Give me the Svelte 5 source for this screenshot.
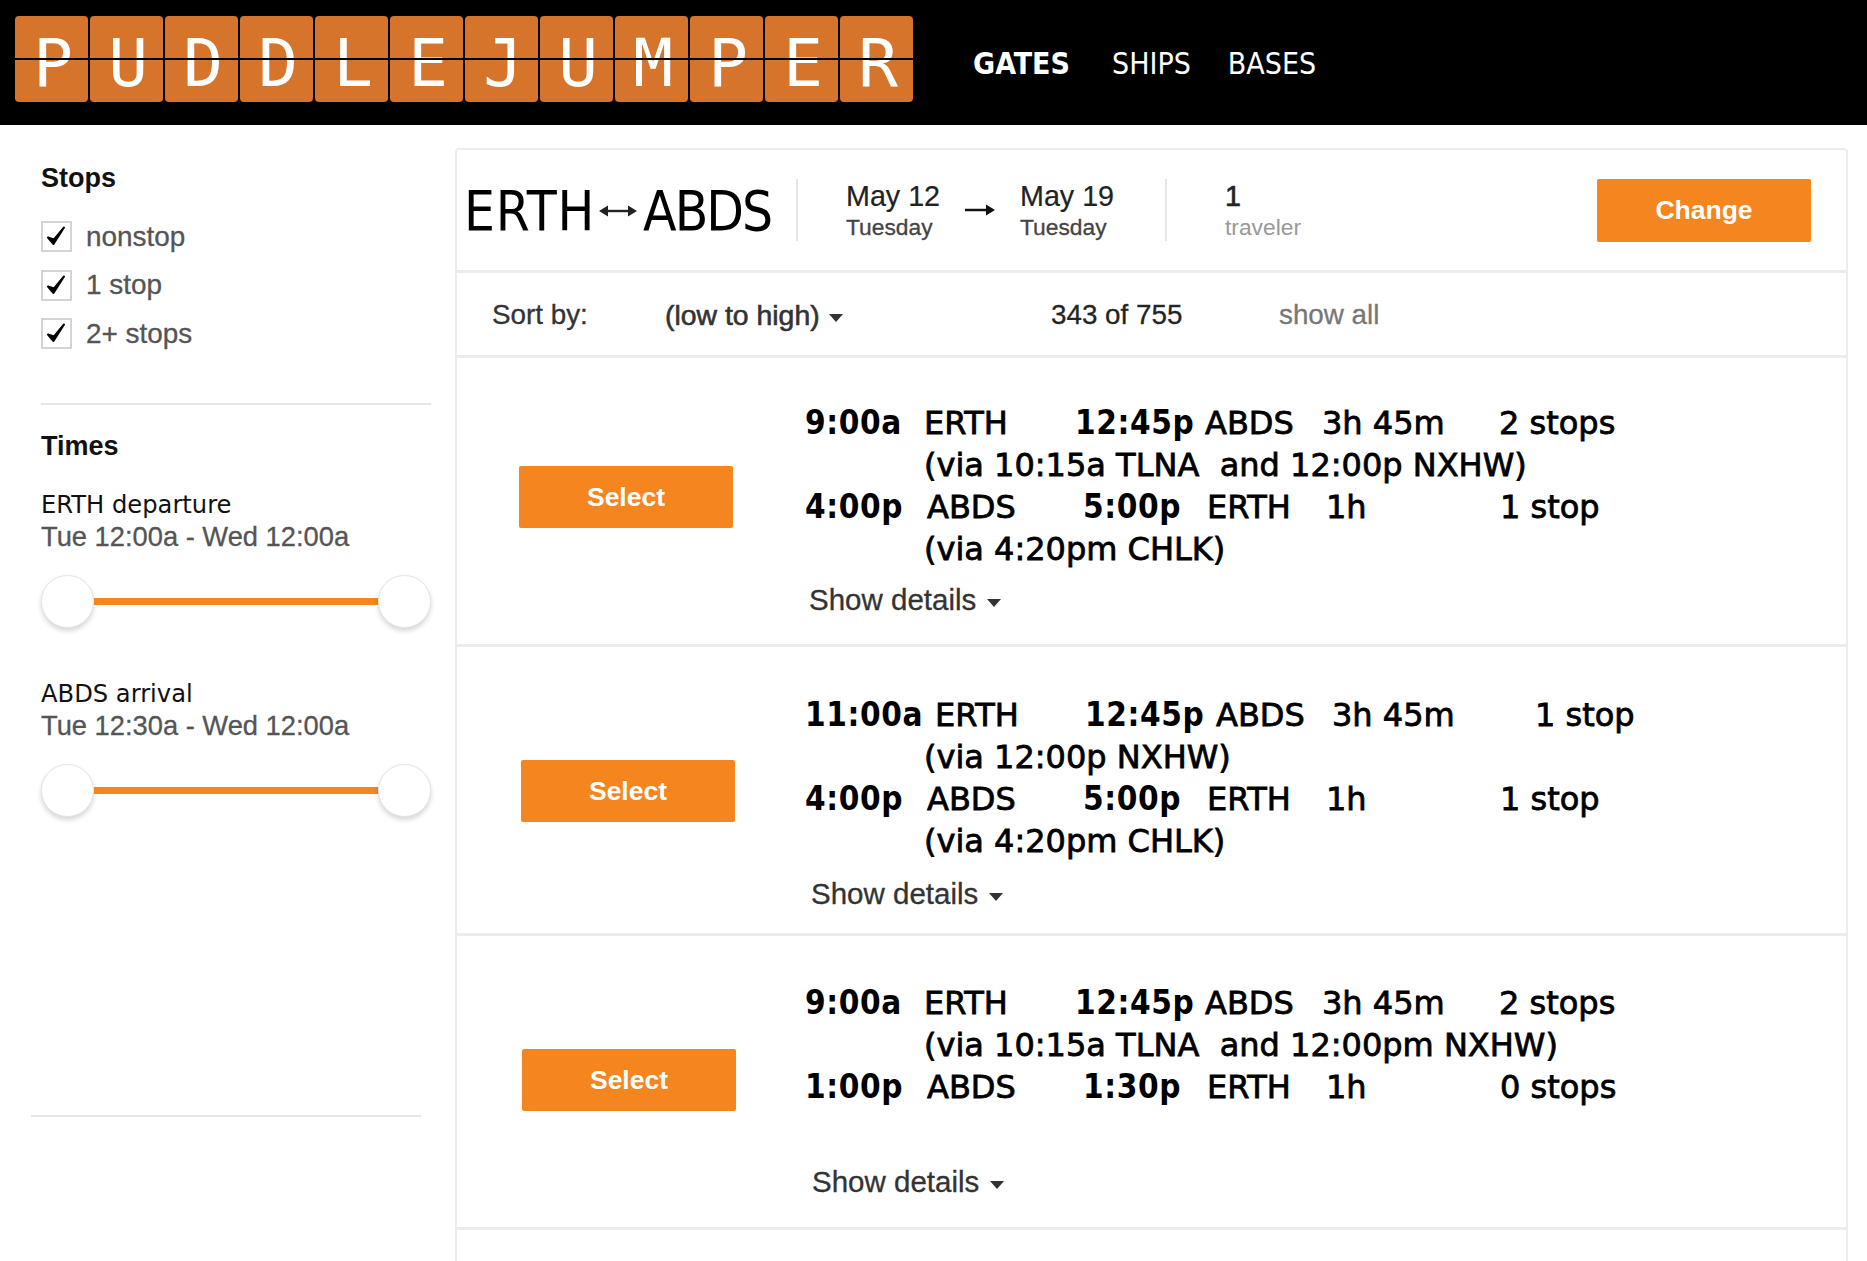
<script>
  const letters = 'PUDDLEJUMPER'.split('')
  const nav = ['GATES', 'SHIPS', 'BASES']
  const stops = ['nonstop', '1 stop', '2+ stops']
  const times = [
    { label: 'ERTH departure', range: 'Tue 12:00a - Wed 12:00a' },
    { label: 'ABDS arrival', range: 'Tue 12:30a - Wed 12:00a' }
  ]

  // cell widths follow the columns of the mockup, they differ a bit per leg
  const results = [
    {
      height: 289, nudge: 0, btnTop: 108, top: 44, detailsGap: 9,
      legs: [
        { cells: ['9:00a', 'ERTH', '12:45p', 'ABDS', '3h 45m', '2 stops'], widths: [119, 151, 130, 117, 177], via: '(via 10:15a TLNA  and 12:00p NXHW)' },
        { cells: ['4:00p', 'ABDS', '5:00p', 'ERTH', '1h', '1 stop'], widths: [122, 156, 124, 119, 174], via: '(via 4:20pm CHLK)' }
      ]
    },
    {
      height: 289, nudge: 2, btnTop: 113, top: 47, detailsGap: 11,
      legs: [
        { cells: ['11:00a', 'ERTH', '12:45p', 'ABDS', '3h 45m', '1 stop'], widths: [130, 150, 131, 116, 203], via: '(via 12:00p NXHW)' },
        { cells: ['4:00p', 'ABDS', '5:00p', 'ERTH', '1h', '1 stop'], widths: [122, 156, 124, 119, 174], via: '(via 4:20pm CHLK)' }
      ]
    },
    {
      height: 294, nudge: 3, btnTop: 113, top: 46, detailsGap: 11,
      legs: [
        { cells: ['9:00a', 'ERTH', '12:45p', 'ABDS', '3h 45m', '2 stops'], widths: [119, 151, 130, 117, 177], via: '(via 10:15a TLNA  and 12:00pm NXHW)' },
        { cells: ['1:00p', 'ABDS', '1:30p', 'ERTH', '1h', '0 stops'], widths: [122, 156, 124, 119, 174], via: '' }
      ]
    }
  ]
</script>

<header>
  <div class="logo">
    {#each letters as letter}
      <span class="tile">{letter}</span>
    {/each}
    <i class="flap"></i>
  </div>
  <nav>
    {#each nav as item, i}
      <a href="#top" class:active={i === 0}>{item}</a>
    {/each}
  </nav>
</header>

<div class="page">
  <aside>
    <h3>Stops</h3>
    <ul>
      {#each stops as stop}
        <li>
          <span class="box">
            <svg viewBox="0 0 31 31" width="31" height="31"><path d="M7 16.5 L12.5 23 L23 6.5 L13 18.5 Z" fill="#000" stroke="#000" stroke-width="2" stroke-linejoin="round" /></svg>
          </span>
          {stop}
        </li>
      {/each}
    </ul>
    <hr />
    <h3 class="times">Times</h3>
    {#each times as t}
      <div class="range">
        <div class="range-label">{t.label}</div>
        <div class="range-value">{t.range}</div>
        <div class="slider">
          <span class="knob"></span>
          <span class="track"></span>
          <span class="knob"></span>
        </div>
      </div>
    {/each}
    <hr class="last" />
  </aside>

  <main>
    <section class="summary">
      <div class="route">
        <span class="from">ERTH</span>
        <svg class="swap" viewBox="0 0 40 14" width="40" height="14"><path d="M5 7H35" stroke="#222" stroke-width="2.4" /><path d="M10 1.5 L1 7 L10 12.5 Z M30 1.5 L39 7 L30 12.5 Z" fill="#222" /></svg>
        <span class="to">ABDS</span>
      </div>
      <div class="dates">
        <div class="date"><b>May 12</b><small>Tuesday</small></div>
        <svg class="arrow" viewBox="0 0 30 14" width="30" height="14"><path d="M0 7H25" stroke="#111" stroke-width="2.5" /><path d="M21 1.5 L30 7 L21 12.5 Z" fill="#111" /></svg>
        <div class="date"><b>May 19</b><small>Tuesday</small></div>
      </div>
      <div class="travelers"><b>1</b><small>traveler</small></div>
      <button class="change">Change</button>
    </section>

    <section class="sort">
      <span class="sort-label">Sort by:</span>
      <span class="sort-value">(low to high)<i class="caret"></i></span>
      <span class="count">343 of 755</span>
      <span class="show-all">show all</span>
    </section>

    {#each results as r}
      <section class="result" style:height="{r.height}px">
        <div class="action" style:padding-top="{r.btnTop}px" style:padding-left="{62 + r.nudge}px"><button class="select">Select</button></div>
        <div class="flight" style:padding-top="{r.top}px">
          {#each r.legs as leg}
            <div class="leg">
              {#each leg.cells as cell, i}
                <span class:time={i === 0 || i === 2} style:width={i < 5 ? `${leg.widths[i]}px` : null}>{cell}</span>
              {/each}
            </div>
            <div class="via">{leg.via}&nbsp;</div>
          {/each}
          <div class="details" style:margin-top="{r.detailsGap}px" style:margin-left="{4 + r.nudge}px">Show details<i class="caret"></i></div>
        </div>
      </section>
    {/each}
  </main>
</div>

<style>
  :global(body) {
    background: #fff;
    font-family: "Liberation Sans", Arial, sans-serif;
    overflow: hidden;
  }

  header {
    display: flex;
    align-items: flex-start;
    height: 125px;
    background: #000;
  }
  .logo {
    position: relative;
    display: flex;
    gap: 2px;
    margin: 16px 0 0 15px;
  }
  .tile {
    width: 73px;
    height: 86px;
    background: #d5742a;
    border-radius: 4px;
    color: #fff;
    font: 66px/96px "DejaVu Sans Mono", monospace;
    text-align: center;
    text-indent: 3px;
    overflow: hidden;
  }
  .flap {
    position: absolute;
    left: 0;
    right: 0;
    top: 42px;
    height: 2px;
    background: #000;
  }
  nav {
    display: flex;
    gap: 37px;
    margin: 44px 0 0 60px;
  }
  nav a {
    color: #fff;
    text-decoration: none;
    font: 30px/40px "DejaVu Sans Condensed", "DejaVu Sans", sans-serif;
  }
  nav a.active {
    font-weight: 700;
    margin-right: 5px;
  }

  .page {
    display: flex;
    height: 1136px;
  }

  aside {
    width: 455px;
    flex: none;
    box-sizing: border-box;
    padding: 37px 24px 0 41px;
  }
  h3 {
    margin: 0;
    font-size: 27px;
    line-height: 32px;
    color: #111;
  }
  ul {
    list-style: none;
    margin: 27px 0 0;
    padding: 0;
  }
  li {
    display: flex;
    align-items: center;
    gap: 14px;
    height: 31px;
    margin-bottom: 17.5px;
    font-size: 27.9px;
    color: #555;
    -webkit-text-stroke: 0.3px #555;
  }
  .box {
    display: block;
    width: 31px;
    height: 31px;
    box-sizing: border-box;
    border: 2px solid #d4d4d4;
  }
  .box svg {
    display: block;
    margin: -2px;
  }
  hr {
    margin: 54px 0 0;
    border: 0;
    border-top: 2px solid #e6e6e6;
  }
  .times {
    margin-top: 25px;
  }
  .range {
    margin-top: 27px;
    height: 189px;
  }
  .range + .range {
    margin-top: 0;
  }
  .range-label {
    font: 24.2px/32px "DejaVu Sans", sans-serif;
    color: #111;
  }
  .range-value {
    font-size: 27.3px;
    line-height: 32px;
    color: #555;
    -webkit-text-stroke: 0.3px #555;
  }
  .slider {
    display: flex;
    align-items: center;
    margin-top: 22px;
    width: 390px;
  }
  .knob {
    width: 53px;
    height: 53px;
    flex: none;
    box-sizing: border-box;
    border-radius: 50%;
    background: #fff;
    border: 1px solid #e4e4e4;
    box-shadow: 0 3px 5px rgba(0, 0, 0, 0.16);
  }
  .track {
    flex: 1;
    height: 7px;
    background: #f5851f;
  }
  hr.last {
    margin: 248px 10px 0 -10px;
  }

  main {
    width: 1393px;
    flex: none;
    box-sizing: border-box;
    margin-top: 23px;
    border: 2px solid #ececec;
    border-bottom: 0;
    border-radius: 4px 4px 0 0;
  }
  section {
    border-bottom: 3px solid #ececec;
    box-sizing: border-box;
  }
  .summary {
    display: flex;
    align-items: center;
    height: 123px;
    padding-left: 7px;
    position: relative;
  }
  small {
    display: block;
    font-size: 22.8px;
    line-height: 30px;
    color: #444;
    -webkit-text-stroke: 0.3px #444;
  }
  .route {
    display: flex;
    align-items: center;
    width: 334px;
    box-sizing: border-box;
    height: 62px;
    border-right: 2px solid #e6e6e6;
    font: 54.5px/64px "DejaVu Sans Condensed", "DejaVu Sans", sans-serif;
    color: #000;
    white-space: nowrap;
  }
  .from {
    letter-spacing: 0.8px;
    padding-top: 2px;
  }
  .to {
    letter-spacing: -2px;
    padding-top: 2px;
  }
  .swap {
    flex: none;
    margin: 2px 5px 0 3px;
  }
  .dates {
    display: flex;
    align-items: center;
    width: 369px;
    box-sizing: border-box;
    height: 62px;
    padding-left: 48px;
    border-right: 2px solid #e6e6e6;
  }
  .date {
    width: 88px;
    padding-top: 1px;
  }
  .date b, .travelers b {
    display: block;
    font-weight: 400;
    font-size: 28.7px;
    line-height: 32px;
    color: #222;
    white-space: nowrap;
    -webkit-text-stroke: 0.2px #222;
  }
  .arrow {
    margin: 0 25px 0 31px;
  }
  .travelers {
    padding: 1px 0 0 58px;
  }
  .travelers b {
    -webkit-text-stroke: 0.6px #222;
  }
  .travelers small {
    color: #999;
    -webkit-text-stroke: 0;
  }
  button {
    border: 0;
    border-radius: 2px;
    background: #f5851f;
    color: #fff;
    font-family: inherit;
    font-weight: 700;
    font-size: 26.5px;
    padding: 0;
  }
  .change {
    position: absolute;
    right: 35px;
    top: 29px;
    width: 214px;
    height: 63px;
  }
  .sort {
    position: relative;
    height: 85px;
    display: flex;
    align-items: center;
    font-size: 27.8px;
    color: #333;
    padding: 2px 0 0 35px;
    -webkit-text-stroke: 0.3px #333;
  }
  .sort-label {
    width: 173px;
  }
  .sort-value {
    width: 386px;
    font-size: 28.4px;
    -webkit-text-stroke: 0.6px #333;
  }
  .count {
    width: 228px;
    color: #222;
  }
  .show-all {
    color: #777;
    -webkit-text-stroke: 0.3px #777;
  }
  .caret {
    display: inline-block;
    margin-left: 9px;
    vertical-align: 3px;
    border: 7px solid transparent;
    border-top: 8px solid currentColor;
    border-bottom: 0;
  }
  .result {
    display: flex;
    align-items: flex-start;
  }
  .action {
    width: 348px;
    flex: none;
    box-sizing: border-box;
  }
  .select {
    display: block;
    width: 214px;
    height: 62px;
  }
  .flight {
    font: 32px/42px "DejaVu Sans", sans-serif;
    color: #000;
    -webkit-text-stroke: 0.8px #000;
    min-width: 0;
    flex: 1;
  }
  .leg {
    display: flex;
    white-space: pre;
  }
  .leg .time {
    font: 700 33px/42px "DejaVu Sans Condensed", "DejaVu Sans", sans-serif;
    letter-spacing: 0.6px;
    -webkit-text-stroke: 0;
  }
  .via {
    padding-left: 119px;
    white-space: pre;
  }
  .details {
    font: 29.5px/42px "Liberation Sans", Arial, sans-serif;
    color: #333;
    -webkit-text-stroke: 0.3px #333;
  }
  .details .caret {
    margin-left: 11px;
  }
</style>
